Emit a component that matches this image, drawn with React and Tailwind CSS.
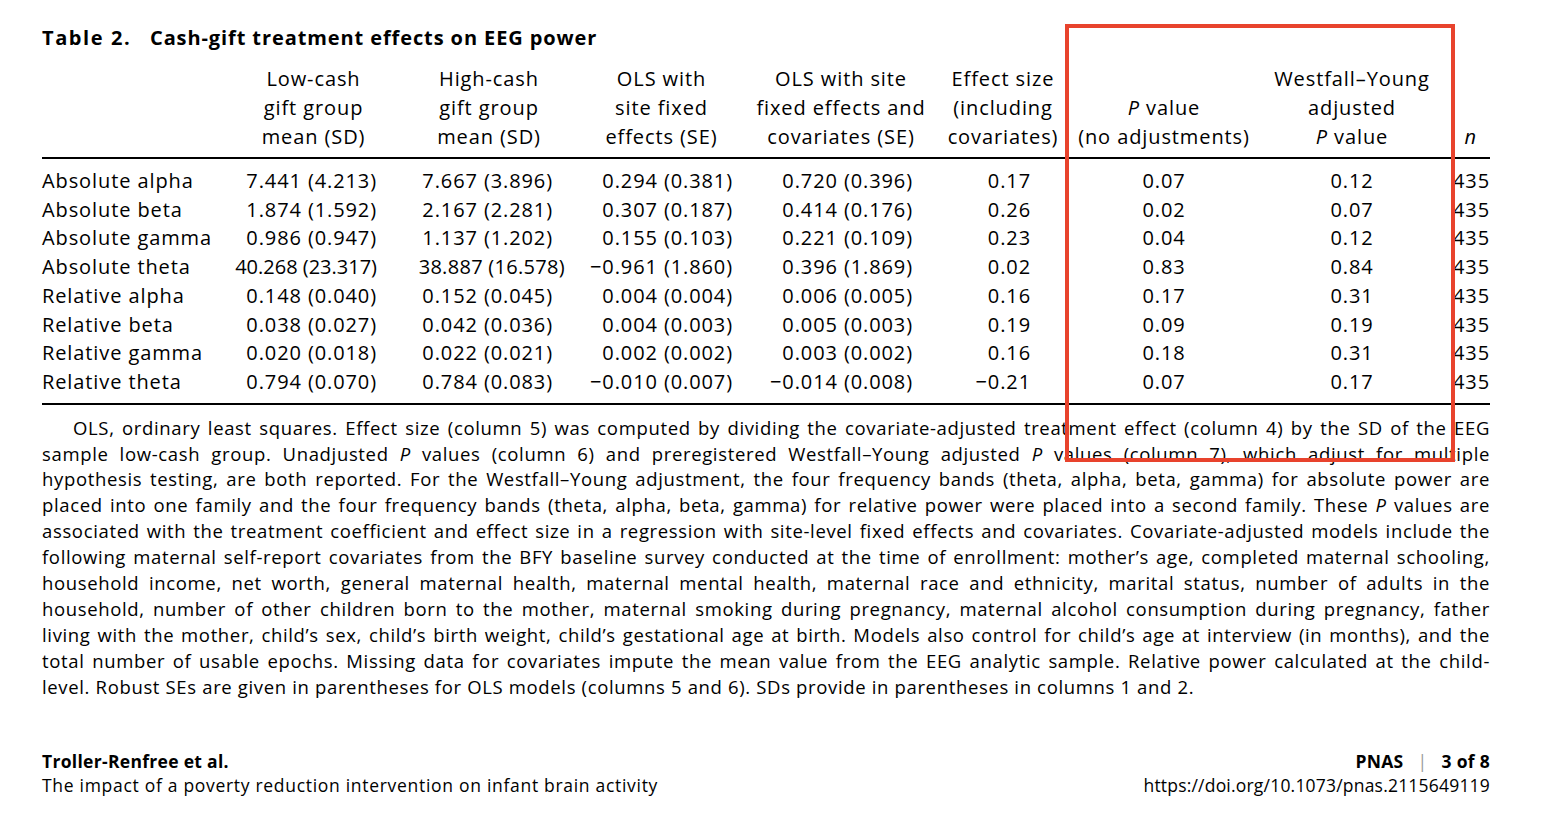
import React from "react";

const rows = [
  ["Absolute alpha", "7.441 (4.213)", "7.667 (3.896)", "0.294 (0.381)", "0.720 (0.396)", "0.17", "0.07", "0.12", "435"],
  ["Absolute beta", "1.874 (1.592)", "2.167 (2.281)", "0.307 (0.187)", "0.414 (0.176)", "0.26", "0.02", "0.07", "435"],
  ["Absolute gamma", "0.986 (0.947)", "1.137 (1.202)", "0.155 (0.103)", "0.221 (0.109)", "0.23", "0.04", "0.12", "435"],
  ["Absolute theta", "40.268 (23.317)", "38.887 (16.578)", "\u22120.961 (1.860)", "0.396 (1.869)", "0.02", "0.83", "0.84", "435"],
  ["Relative alpha", "0.148 (0.040)", "0.152 (0.045)", "0.004 (0.004)", "0.006 (0.005)", "0.16", "0.17", "0.31", "435"],
  ["Relative beta", "0.038 (0.027)", "0.042 (0.036)", "0.004 (0.003)", "0.005 (0.003)", "0.19", "0.09", "0.19", "435"],
  ["Relative gamma", "0.020 (0.018)", "0.022 (0.021)", "0.002 (0.002)", "0.003 (0.002)", "0.16", "0.18", "0.31", "435"],
  ["Relative theta", "0.794 (0.070)", "0.784 (0.083)", "\u22120.010 (0.007)", "\u22120.014 (0.008)", "\u22120.21", "0.07", "0.17", "435"],
];

const grid =
  "grid grid-cols-[190px_163px_188px_157px_202px_122px_200px_176px_50px]";

const P = () => <i>P</i>;

function J({ children, first }) {
  return (
    <div className={"text-justify [text-align-last:justify] " + (first ? "pl-[31px]" : "")}>
      {children}
    </div>
  );
}

function R({ children, className }) {
  return (
    <div className={"flex justify-end whitespace-nowrap min-w-0 " + className}>
      <span>{children}</span>
    </div>
  );
}

export default function App() {
  return (
    <div
      className="relative w-[1546px] h-[826px] bg-white text-black overflow-hidden"
      style={{ fontFamily: '"Open Sans", "Noto Sans", sans-serif' }}
    >
      <div className="pl-[42px] pr-[56px] pt-[26px]">
        <div className="flex text-[20px] leading-[24px] font-bold tracking-[0.9px]">
          <span className="w-[108px] tracking-[1.6px]">Table 2.</span>
          <span>Cash-gift treatment effects on EEG power</span>
        </div>

        {/* header */}
        <div className={grid + " items-end text-[20px] leading-[29px] tracking-[0.9px] mt-[14px] pb-[6px] border-b-2 border-black text-center whitespace-nowrap"}>
          <div></div>
          <div>Low-cash<br />gift group<br />mean (SD)</div>
          <div>High-cash<br />gift group<br />mean (SD)</div>
          <div>OLS with<br />site fixed<br />effects (SE)</div>
          <div>OLS with site<br />fixed effects and<br />covariates (SE)</div>
          <div>Effect size<br />(including<br />covariates)</div>
          <div><P /> value<br />(no adjustments)</div>
          <div>Westfall–Young<br />adjusted<br /><P /> value</div>
          <div className="text-right pr-[13px]"><i>n</i></div>
        </div>

        {/* body */}
        <div className="pt-[8px] pb-[6px] border-b-2 border-black text-[20px] leading-[28.7px] tracking-[0.9px]">
          {rows.map((r, i) => (
            <div key={i} className={grid}>
              <div className="text-left whitespace-nowrap">{r[0]}</div>
              <R className={i === 3 ? "pr-[18px] tracking-[0px]" : "pr-[18px]"}>{r[1]}</R>
              <R className={i === 3 ? "pr-[18px] tracking-[0.3px]" : "pr-[30px]"}>{r[2]}</R>
              <R className="pr-[7px]">{r[3]}</R>
              <R className="pr-[29px]">{r[4]}</R>
              <R className="pr-[33px]">{r[5]}</R>
              <div className="text-center whitespace-nowrap">{r[6]}</div>
              <div className="text-center whitespace-nowrap">{r[7]}</div>
              <R className="">{r[8]}</R>
            </div>
          ))}
        </div>

        {/* caption */}
        <div className="pt-[10px] text-[18.5px] leading-[25.9px] tracking-[0.65px]">
          <J first>OLS, ordinary least squares. Effect size (column 5) was computed by dividing the covariate-adjusted treatment effect (column 4) by the SD of the EEG</J>
          <J>sample low-cash group. Unadjusted <P /> values (column 6) and preregistered Westfall–Young adjusted <P /> values (column 7), which adjust for multiple</J>
          <J>hypothesis testing, are both reported. For the Westfall–Young adjustment, the four frequency bands (theta, alpha, beta, gamma) for absolute power are</J>
          <J>placed into one family and the four frequency bands (theta, alpha, beta, gamma) for relative power were placed into a second family. These <P /> values are</J>
          <J>associated with the treatment coefficient and effect size in a regression with site-level fixed effects and covariates. Covariate-adjusted models include the</J>
          <J>following maternal self-report covariates from the BFY baseline survey conducted at the time of enrollment: mother’s age, completed maternal schooling,</J>
          <J>household income, net worth, general maternal health, maternal mental health, maternal race and ethnicity, marital status, number of adults in the</J>
          <J>household, number of other children born to the mother, maternal smoking during pregnancy, maternal alcohol consumption during pregnancy, father</J>
          <J>living with the mother, child’s sex, child’s birth weight, child’s gestational age at birth. Models also control for child’s age at interview (in months), and the</J>
          <J>total number of usable epochs. Missing data for covariates impute the mean value from the EEG analytic sample. Relative power calculated at the child-</J>
          <div>level. Robust SEs are given in parentheses for OLS models (columns 5 and 6). SDs provide in parentheses in columns 1 and 2.</div>
        </div>

        {/* footer */}
        <div className="mt-[49px] flex justify-between text-[17.5px] leading-[24px] tracking-[0.7px]">
          <div>
            <div className="font-bold tracking-[0.3px]">Troller-Renfree et al.</div>
            <div>The impact of a poverty reduction intervention on infant brain activity</div>
          </div>
          <div className="text-right">
            <div className="font-bold flex justify-end items-center tracking-[0.3px]">
              <span>PNAS</span>
              <span className="mx-[14px] font-normal text-[#9a9a9a]">|</span>
              <span>3 of 8</span>
            </div>
            <div className="tracking-[0.2px]">https://doi.org/10.1073/pnas.2115649119</div>
          </div>
        </div>
      </div>

      {/* red highlight overlay */}
      <div className="absolute left-[1065px] top-[24px] w-[390px] h-[438px] border-4 border-[#e8432d] pointer-events-none"></div>
    </div>
  );
}
